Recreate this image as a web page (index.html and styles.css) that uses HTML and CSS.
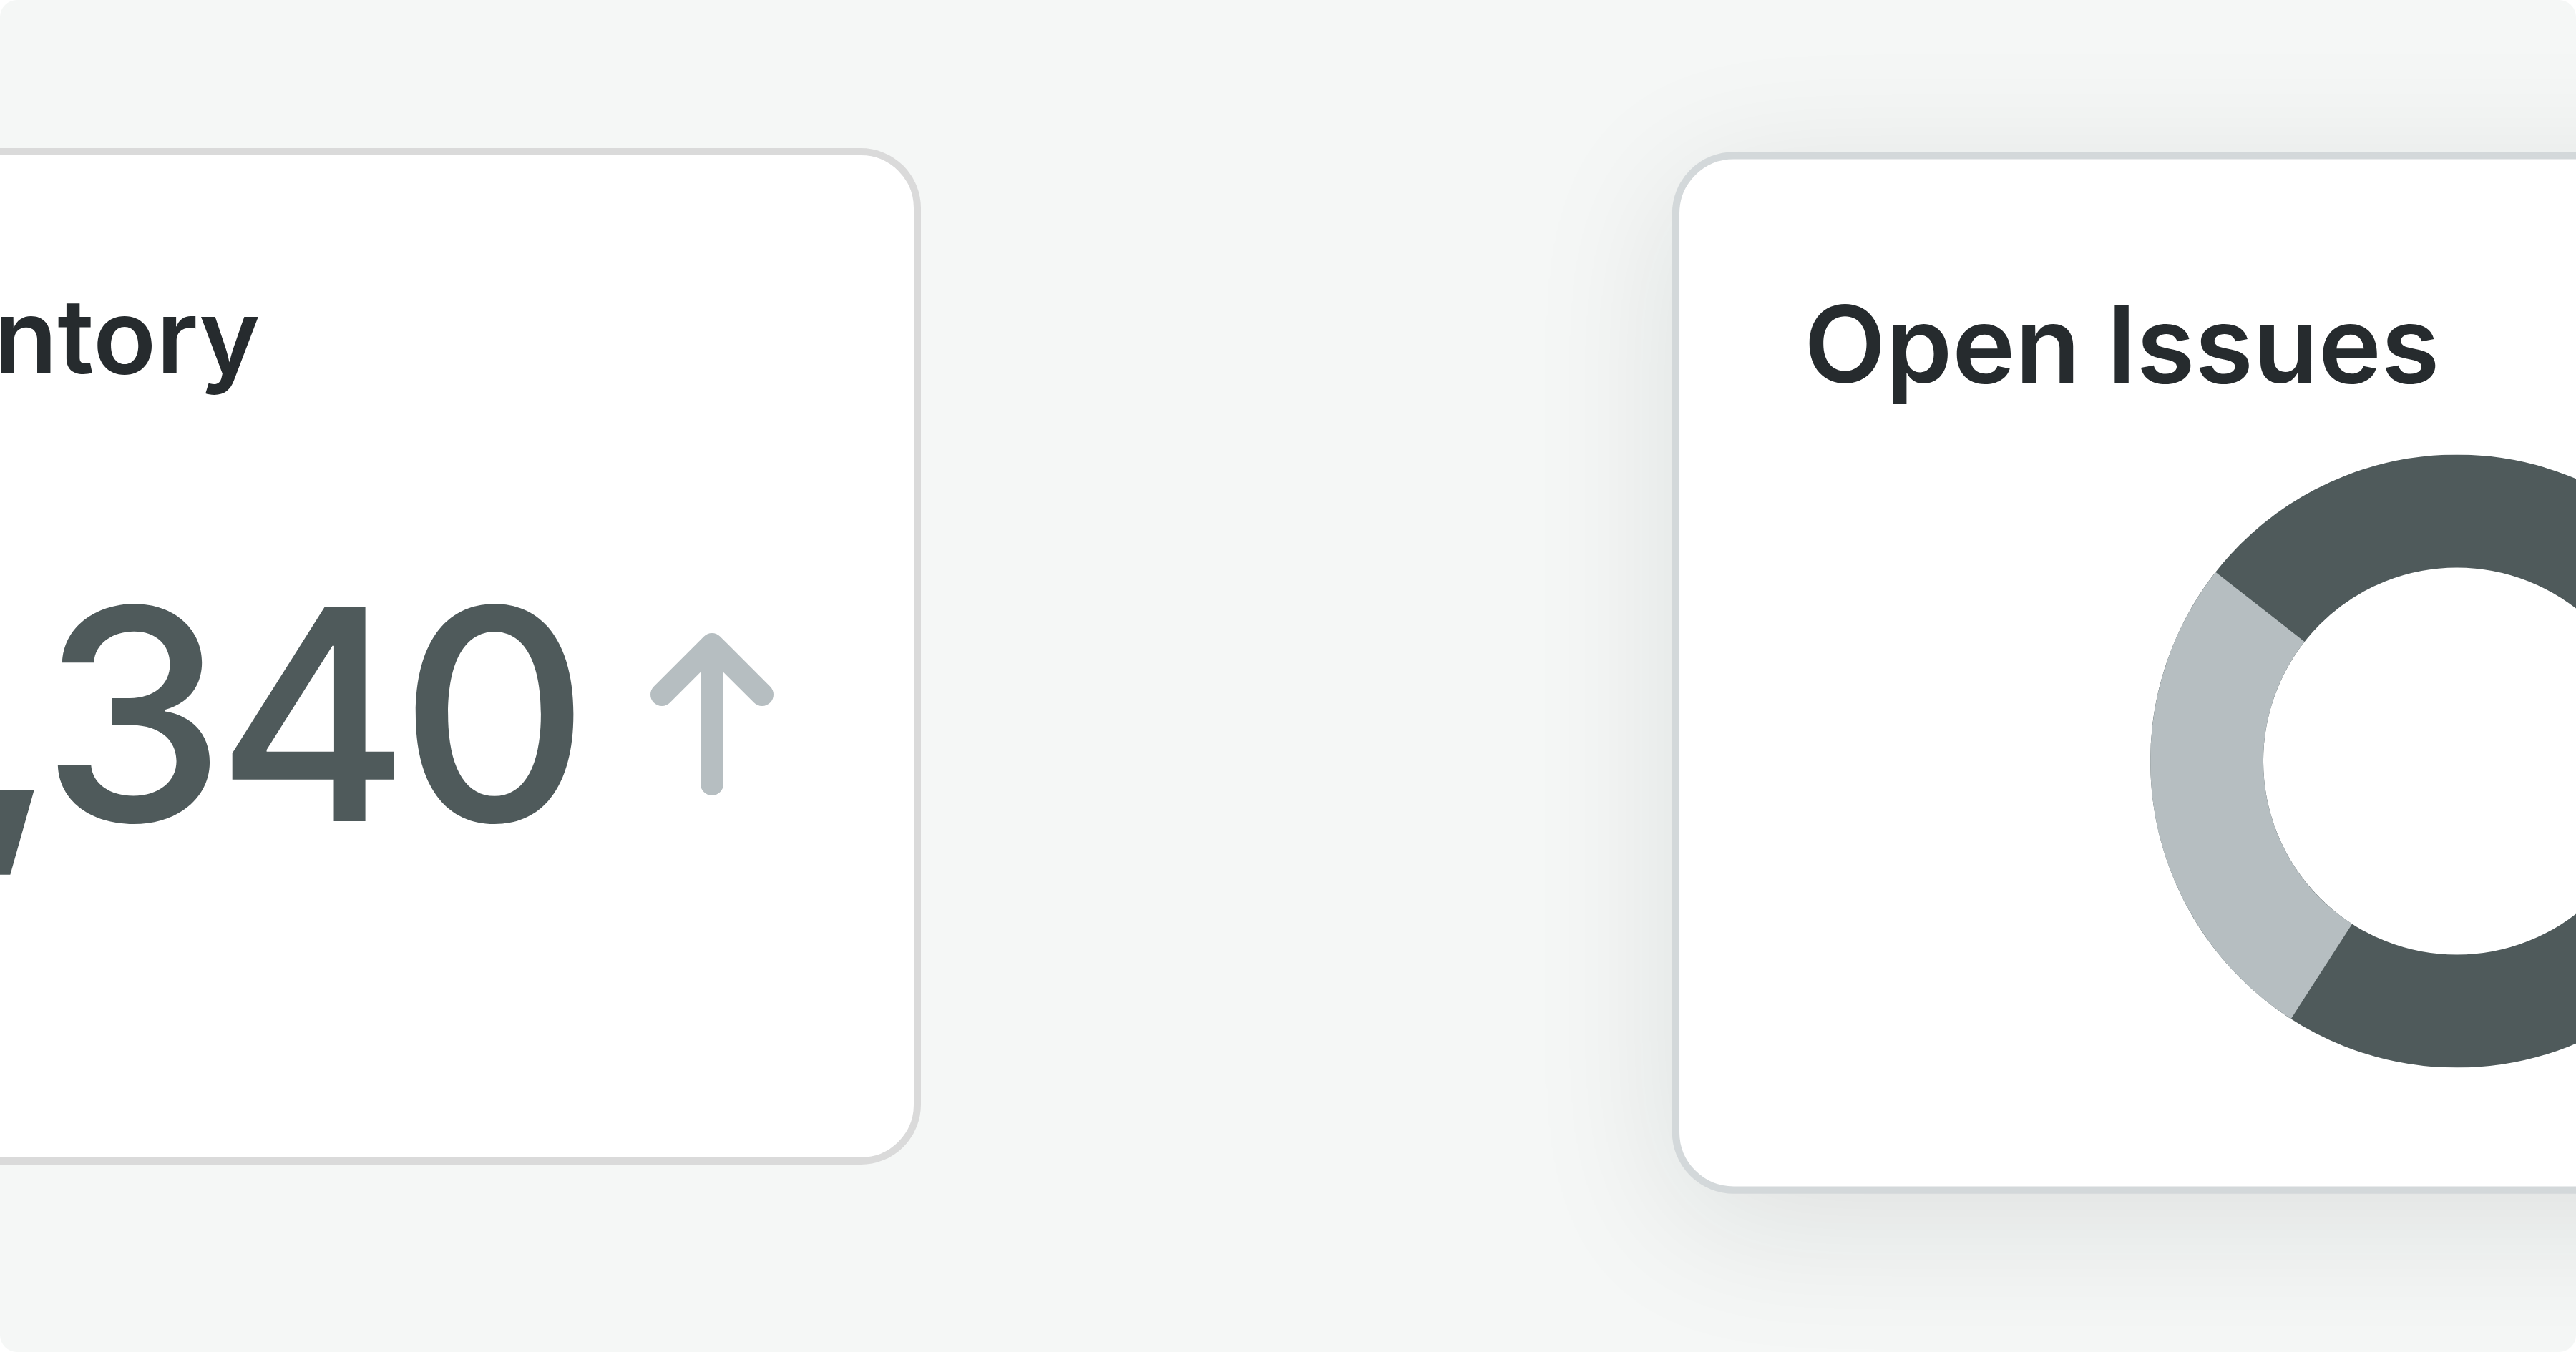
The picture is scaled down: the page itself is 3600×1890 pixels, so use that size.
FILE: index.html
```html
<!DOCTYPE html>
<html lang="en">
<head>
<meta charset="utf-8">
<title>Dashboard</title>
<link rel="stylesheet" href="styles.css">
</head>
<body>
<main class="page">
  <section class="card card-left">
    <h2 class="card-title">Inventory</h2>
    <div class="metric">
      <span class="metric-value">1,340</span>
      <svg class="metric-arrow" width="172" height="227" viewBox="0 0 172 227" aria-hidden="true">
        <path d="M86 16 V211 M16 86 L86 16 L156 86" fill="none" stroke="currentColor" stroke-width="32" stroke-linecap="round" stroke-linejoin="round"/>
      </svg>
    </div>
  </section>
  <section class="card card-right">
    <h2 class="card-title">Open Issues</h2>
    <div class="chart">
      <svg class="donut" width="836" height="836" viewBox="0 0 836 836" aria-hidden="true">
        <circle class="seg-dark" cx="418" cy="418" r="341" fill="none" stroke-width="154"/>
        <circle class="seg-light" cx="418" cy="418" r="341" fill="none" stroke-width="154" stroke-dasharray="567.2 2142.6" stroke-dashoffset="-730.3"/>
      </svg>
    </div>
  </section>
</main>
</body>
</html>
```

FILE: styles.css
```css
html, body {
  margin: 0;
  padding: 0;
  background: #ffffff;
}

body {
  font-family: Inter, "Liberation Sans", sans-serif;
}

.page {
  width: 3600px;
  height: 1890px;
  box-sizing: border-box;
  border-radius: 24px;
  background: #f5f7f6;
  overflow: hidden;
  display: flex;
  align-items: flex-start;
  gap: 1072px;
  padding-top: 207px;
}

.card {
  flex: none;
  width: 1776px;
  height: 1421px;
  box-sizing: border-box;
  border: 10px solid #dadada;
  border-radius: 84px;
  background: #ffffff;
  padding: 166px 0 0 170px;
}

.card-left {
  margin-left: -489px;
}

.card-right {
  margin-top: 23px;
  border-color: #d3d8da;
  transform: scale(1.025);
  box-shadow: 0 40px 200px rgba(20, 30, 30, 0.10);
}

.card-title {
  margin: 0;
  font-size: 145px;
  line-height: 1.2;
  font-weight: 600;
  color: #262b2e;
  white-space: nowrap;
}

.card-left .card-title {
  padding-left: 6px;
}

.metric {
  margin-top: 235px;
  margin-left: 109px;
  display: flex;
  align-items: center;
  gap: 99px;
}

.metric-value {
  font-size: 412px;
  line-height: 1;
  font-weight: 500;
  letter-spacing: -14px;
  color: #4f5a5b;
  white-space: nowrap;
}

.metric-arrow {
  flex: none;
  color: #b6bec1;
}

.chart {
  margin-top: 63px;
  padding-left: 472px;
}

.donut {
  display: block;
}

.seg-dark {
  stroke: #4f5a5b;
}

.seg-light {
  stroke: #b6bec1;
}
```
